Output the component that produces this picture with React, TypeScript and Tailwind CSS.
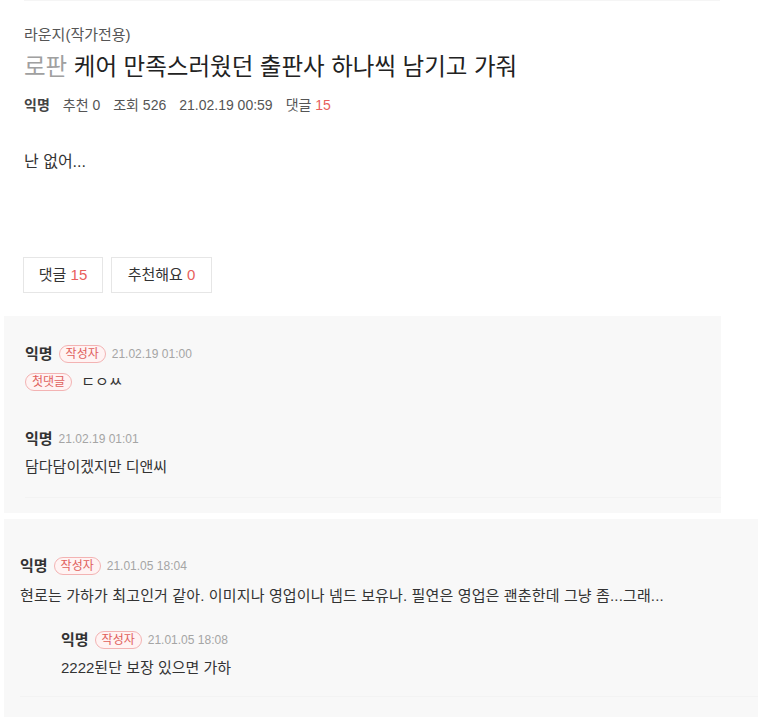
import React from 'react';

const font = { fontFamily: '"Liberation Sans", "Noto Sans CJK KR", sans-serif' };

function WriterBadge({ label = '작성자' }: { label?: string }) {
  return (
    <span className="inline-flex items-center h-[18px] px-[6px] rounded-full border border-[#f3b3b3] bg-[#fff3f3] text-[12px] leading-none text-[#e0605c]">
      {label}
    </span>
  );
}

interface CommentMetaProps {
  time: string;
  writer?: boolean;
}

function CommentMeta({ time, writer }: CommentMetaProps) {
  return (
    <div className="flex items-center gap-[6px] h-5">
      <span className="text-[15px] font-semibold text-[#333]">익명</span>
      {writer && <WriterBadge />}
      <span className="text-[12px] text-[#a5a5a5]">{time}</span>
    </div>
  );
}

export default function App() {
  return (
    <div className="w-[758px] h-[718px] overflow-hidden bg-white" style={font}>
      {/* article header */}
      <div className="w-[720px] pl-6">
        <div className="h-px bg-[#f5f5f5]" />
        <div className="pt-6">
          <div className="text-[15px] leading-5 text-[#555]">라운지(작가전용)</div>
          <h1 className="mt-[7px] text-[23.5px] leading-[30px] text-[#222]">
            <span className="text-[#a0a0a0]">로판</span> 케어 만족스러웠던 출판사 하나씩 남기고 가줘
          </h1>
          <div className="mt-[13px] flex items-center gap-[13px] h-5 text-[14px] text-[#555]">
            <span className="font-semibold text-[#444]">익명</span>
            <span>추천 0</span>
            <span>조회 526</span>
            <span>21.02.19 00:59</span>
            <span>
              댓글 <span className="text-[#e8605c]">15</span>
            </span>
          </div>
          <p className="mt-[37px] text-[16px] leading-5 text-[#333]">난 없어...</p>
          <div className="mt-[85px] flex gap-2 -ml-px">
            <button className="w-[80px] h-9 border border-[#e6e6e6] bg-white text-[15px] text-[#333]">
              댓글 <span className="text-[#e8605c]">15</span>
            </button>
            <button className="w-[101px] h-9 border border-[#e6e6e6] bg-white text-[15px] text-[#333]">
              추천해요 <span className="text-[#e8605c]">0</span>
            </button>
          </div>
        </div>
      </div>

      {/* first comment thread */}
      <div className="mt-[23px] ml-1 w-[717px] h-[197px] bg-[#f8f8f8] pl-[21px] pt-[28px]">
        <CommentMeta time="21.02.19 01:00" writer />
        <div className="mt-2 flex items-center gap-[9px] h-5">
          <WriterBadge label="첫댓글" />
          <span className="text-[15px] text-[#333]">ㄷㅇㅆ</span>
        </div>
        <div className="mt-[37px]">
          <CommentMeta time="21.02.19 01:01" />
          <p className="mt-2 text-[15px] leading-5 text-[#333]">담다담이겠지만 디앤씨</p>
        </div>
        <div className="mt-5 h-px bg-[#f3f3f3]" />
      </div>

      {/* second comment thread */}
      <div className="mt-[6px] ml-1 h-[198px] bg-[#f8f8f8] pl-4 pt-[37px]">
        <CommentMeta time="21.01.05 18:04" writer />
        <p className="mt-[10px] text-[15px] leading-5 tracking-[0.14px] text-[#333]">
          현로는 가하가 최고인거 같아. 이미지나 영업이나 넴드 보유나. 필연은 영업은 괜춘한데 그냥 좀...그래...
        </p>
        <div className="mt-6 pl-[41px]">
          <CommentMeta time="21.01.05 18:08" writer />
          <p className="mt-2 text-[15px] leading-5 text-[#333]">2222된단 보장 있으면 가하</p>
        </div>
        <div className="mt-[18px] h-px bg-[#f3f3f3]" />
      </div>
    </div>
  );
}
